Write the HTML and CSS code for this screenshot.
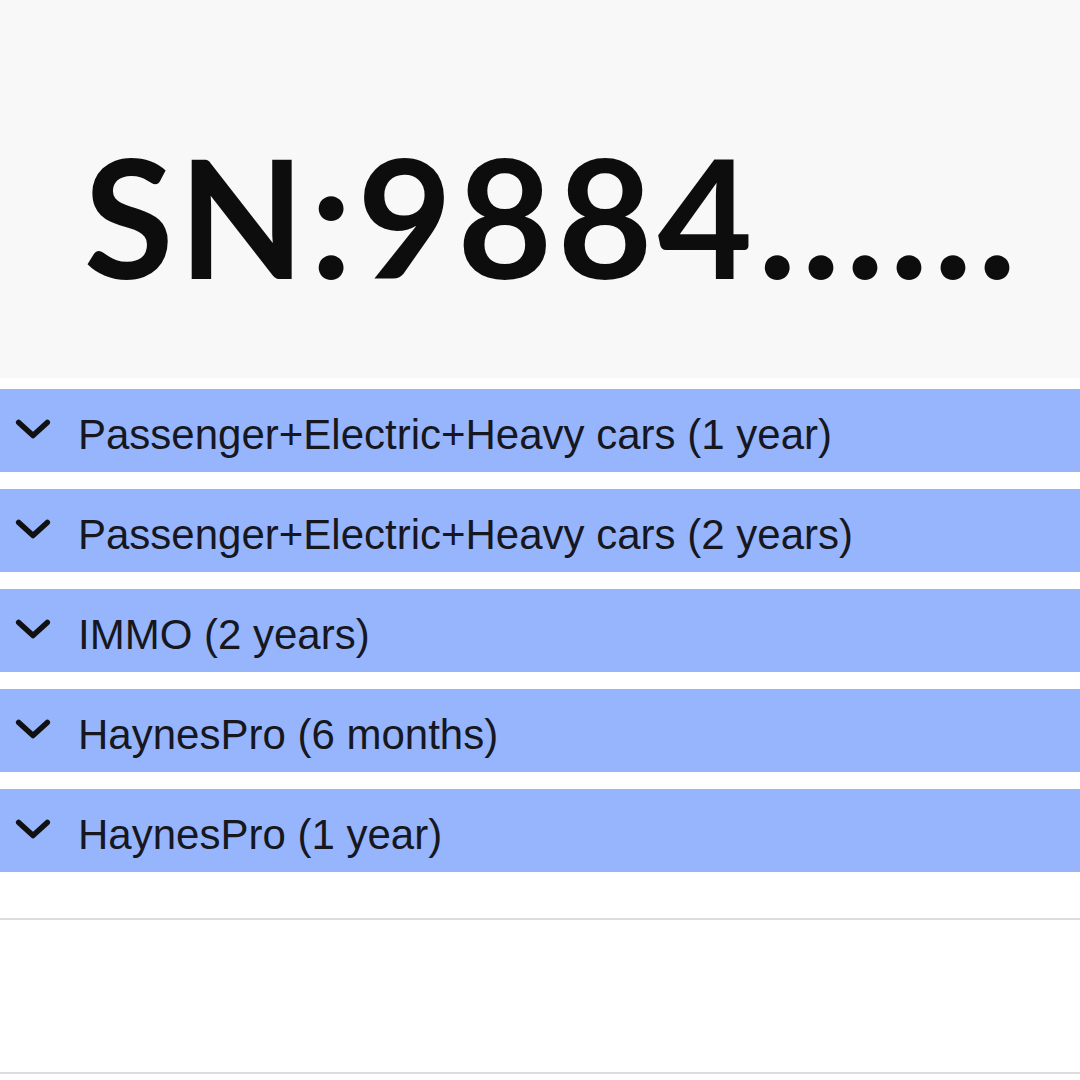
FILE: index.html
```html
<!DOCTYPE html>
<html lang="en">
<head>
    <meta charset="UTF-8">
    <meta name="viewport" content="width=device-width, initial-scale=1.0">
    <title>SN:9884</title>
    <link rel="stylesheet" href="styles.css">
</head>
<body>

    <header class="serial">
        <h1>SN:9884......</h1>
    </header>

    <!-- Abonnements -->
    <div class="plans">
        <div class="plan">
            <svg class="chevron" viewBox="0 0 34 20"><path d="M4 4l13 12 13-12"/></svg>
            <span>Passenger+Electric+Heavy cars (1 year)</span>
        </div>
        <div class="plan">
            <svg class="chevron" viewBox="0 0 34 20"><path d="M4 4l13 12 13-12"/></svg>
            <span>Passenger+Electric+Heavy cars (2 years)</span>
        </div>
        <div class="plan">
            <svg class="chevron" viewBox="0 0 34 20"><path d="M4 4l13 12 13-12"/></svg>
            <span>IMMO (2 years)</span>
        </div>
        <div class="plan">
            <svg class="chevron" viewBox="0 0 34 20"><path d="M4 4l13 12 13-12"/></svg>
            <span>HaynesPro (6 months)</span>
        </div>
        <div class="plan">
            <svg class="chevron" viewBox="0 0 34 20"><path d="M4 4l13 12 13-12"/></svg>
            <span>HaynesPro (1 year)</span>
        </div>
    </div>

    <div class="footer-box"></div>

</body>
</html>
```

FILE: styles.css
```css
body {
    margin: 0;
    background-color: #ffffff;
    font-family: "Liberation Sans", Arial, sans-serif;
    color: #16171f;
}
.serial {
    height: 378px;
    background-color: #f8f8f8;
    display: flex;
    align-items: center;
    justify-content: center;
}
.serial h1 {
    margin: 0;
    padding-top: 52px;
    padding-left: 25px;
    font-family: Lato, "Noto Sans", sans-serif;
    font-weight: 700;
    font-size: 164px;
    letter-spacing: 5px;
    color: #0d0d0d;
}
.plans {
    padding-top: 11px;
    display: flex;
    flex-direction: column;
    gap: 17px;
}
.plan {
    height: 83px;
    background-color: #96b5fd;
    display: flex;
    align-items: center;
    gap: 26px;
    padding-left: 14px;
    padding-top: 8px;
    box-sizing: border-box;
    font-size: 42px;
}
.chevron {
    width: 38px;
    height: 22px;
    margin-top: -12px;
    fill: none;
    stroke: #111;
    stroke-width: 5;
    stroke-linecap: round;
    stroke-linejoin: round;
}
.footer-box {
    margin-top: 46px;
    height: 152px;
    border-top: 2px solid #dcdcdc;
    border-bottom: 2px solid #dcdcdc;
}
```
